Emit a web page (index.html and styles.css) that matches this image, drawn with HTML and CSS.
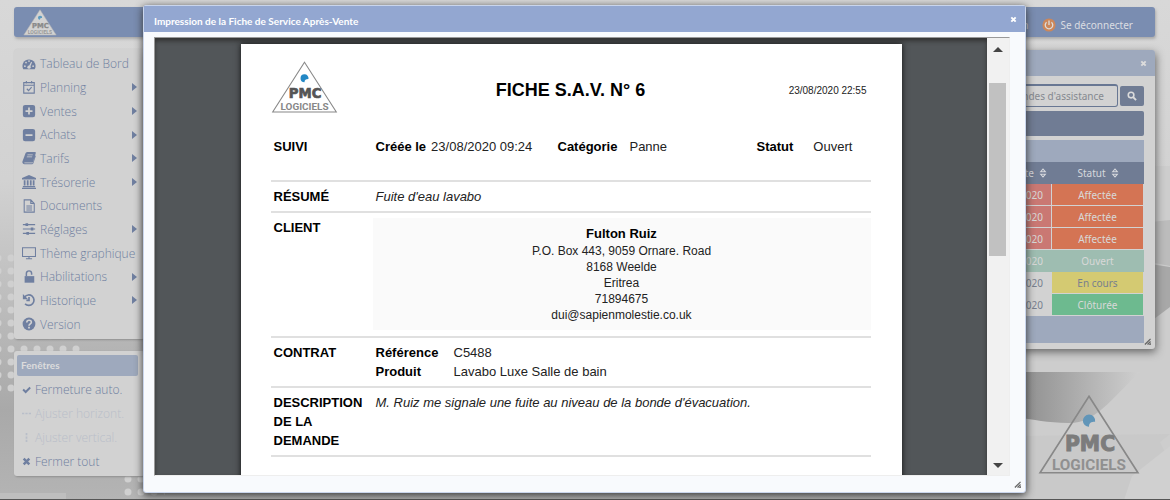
FILE: index.html
```html
<!DOCTYPE html>
<html lang="fr">
<head>
<meta charset="utf-8">
<title>PMC Logiciels</title>
<link rel="stylesheet" href="styles.css">
</head>
<body>
<svg class="backdrop" viewBox="0 0 1170 500" preserveAspectRatio="none" aria-hidden="true">
  <defs>
    <linearGradient id="base" x1="0" y1="0" x2="0" y2="1"><stop offset="0" stop-color="#d8d8d8"/><stop offset=".36" stop-color="#d2d2d2"/><stop offset=".6" stop-color="#bdbdbd"/><stop offset=".82" stop-color="#a9a9a9"/><stop offset="1" stop-color="#b4b4b4"/></linearGradient>
    <linearGradient id="right" x1="0" y1="0" x2="0" y2="1"><stop offset="0" stop-color="#d8d8d8"/><stop offset=".36" stop-color="#d2d2d2"/><stop offset="1" stop-color="#cfcfcf"/></linearGradient>
    <linearGradient id="swoosh" x1="0" y1="0" x2="1" y2="0"><stop offset="0" stop-color="#8e8e8e"/><stop offset="1" stop-color="#cfcfcf"/></linearGradient>
    <pattern id="dots" width="13" height="13" patternUnits="userSpaceOnUse" x="4" y="252"><circle cx="7" cy="6" r="3.5" fill="#d0d0d0"/></pattern>
  </defs>
  <rect width="1170" height="500" fill="url(#base)"/>
  <rect x="1000" width="170" height="500" fill="url(#right)"/>
  <path d="M1100 166H1170V500H1000V340z" fill="#cdcdcd"/>
  <path d="M1150 222l20-2v46l-20-4z" fill="#bcbcbc"/>
  <path d="M1150 264l20 3v40l-20 15z" fill="#a8a8a8"/>
  <path d="M1020 372H1140C1110 400 1095 424 1068 423C1048 423 1032 419 1020 418z" fill="url(#swoosh)"/>
  <path d="M1020 436l150-2-10 8 10 20v38h-150z" fill="#c9c9c9"/>
  <path d="M1170 446l-38 30-8 24h46z" fill="#d0d0d0"/>
  <path d="M0 252H17V392H0zM17 336H82V360H17zM121 474H165V500H121z" fill="url(#dots)"/>
  <path d="M0 493H66V499H0z" fill="#bebebe"/>
  <path d="M0 499H1170V500H0z" fill="#555"/>
</svg>

<svg class="sprite" aria-hidden="true">
  <symbol id="logo" viewBox="0 0 100 80">
    <path d="M50 2L98 77H2z" fill="var(--fill)" stroke="var(--edge)" stroke-width="1.6"/>
    <path d="M50 20a6 6 0 1 0 0 12c0-4 2-5 6-5a6 6 0 0 0-6-7z" fill="var(--dot)"/>
    <text x="51" y="56" text-anchor="middle" class="logo-top">PMC</text>
    <text x="50" y="74" text-anchor="middle" class="logo-bottom">LOGICIELS</text>
  </symbol>
  <symbol id="gauge" viewBox="0 0 16 16"><path d="M1.500 14A7.500 7.500 0 1 1 14.500 14z"/><g fill="#d2d2d2"><circle cx="3.300" cy="10.500" r="1"/><circle cx="4.600" cy="6.300" r="1"/><circle cx="8" cy="4.600" r="1"/><circle cx="12.700" cy="10.500" r="1"/><circle cx="8" cy="11.600" r="1.900"/><path d="M7.500 11l3-5.500 1 .5-2.300 5.700z"/></g></symbol>
  <symbol id="calendar" viewBox="0 0 16 16"><path d="M2 3h12v12H2zM2 6h12M5 1v3M11 1v3M5.500 10l2 2.200 3.500-4" fill="none" stroke="currentColor" stroke-width="1.300"/></symbol>
  <symbol id="plus" viewBox="0 0 16 16"><path fill-rule="evenodd" d="M3.500 1h9A2.500 2.500 0 0 1 15 3.500v9a2.500 2.500 0 0 1-2.500 2.500h-9A2.500 2.500 0 0 1 1 12.500v-9A2.500 2.500 0 0 1 3.500 1zM7 4v3H4v2h3v3h2V9h3V7H9V4z"/></symbol>
  <symbol id="minus" viewBox="0 0 16 16"><path fill-rule="evenodd" d="M3.500 1h9A2.500 2.500 0 0 1 15 3.500v9a2.500 2.500 0 0 1-2.500 2.500h-9A2.500 2.500 0 0 1 1 12.500v-9A2.500 2.500 0 0 1 3.500 1zM4 7v2h8V7z"/></symbol>
  <symbol id="book" viewBox="0 0 16 16"><path fill-rule="evenodd" d="M6 1h8.500c1 0 1.500.6 1.200 1.500L13 12c-.2.700-.8 1-1.500 1H3c-.7 0-.6 1 .2 1h8.900L15 5l.8.800L13 14c-.3.700-.8 1-1.500 1H3c-1.800 0-3-1.500-2.500-3L3.800 3C4.200 1.800 5 1 6 1zm.4 3l-.3.900h6l.3-.9zm-.7 2.200l-.3.900h6l.3-.9z"/></symbol>
  <symbol id="bank" viewBox="0 0 16 16"><path d="M8 0l8 3.500V5H0V3.500zM2 6h2v6H2zM5.500 6h2v6h-2zM9 6h2v6H9zM12.300 6h2v6h-2zM1 12.600h14V14H1zM0 14.500h16V16H0z"/></symbol>
  <symbol id="file" viewBox="0 0 16 16"><path d="M2.500 1H10l4 4v10H2.500zM10 1v4h4M5 8h6.500M5 10.200h6.500M5 12.500h6.500" fill="none" stroke="currentColor" stroke-width="1.200"/></symbol>
  <symbol id="sliders" viewBox="0 0 16 16"><path d="M1 3h14M1 8h14M1 13h14" stroke="currentColor" stroke-width="1.300"/><path d="M4 1.300h3v3.400H4zM10 6.300h3v3.400h-3zM5 11.300h3v3.400H5z"/></symbol>
  <symbol id="screen" viewBox="0 0 16 16"><path d="M.6 2h14.800v10H.6zM8 12v2.500M4.500 14.500h7" fill="none" stroke="currentColor" stroke-width="1.200"/></symbol>
  <symbol id="lock" viewBox="0 0 16 16"><path d="M3 7h11v7.500H3z"/><path d="M5 7V4a3 3 0 0 1 6 0v1.500" fill="none" stroke="currentColor" stroke-width="1.700"/></symbol>
  <symbol id="history" viewBox="0 0 16 16"><path d="M3 4.500A6 6 0 1 1 3.500 12.500M8 4.500v4H5" fill="none" stroke="currentColor" stroke-width="1.900"/><path d="M1 1v6h6z"/></symbol>
  <symbol id="help" viewBox="0 0 16 16"><circle cx="8" cy="8" r="7.300"/><path d="M5.500 6.200c0-3.400 5.200-3.200 5.200-.3C10.700 7.800 8 7.800 8 10" fill="none" stroke="#d2d2d2" stroke-width="1.900"/><path d="M7 11h2v2H7z" fill="#d2d2d2"/></symbol>
  <symbol id="check" viewBox="0 0 16 16"><path d="M2 8l4.500 4.500L14.500 4.500" fill="none" stroke="currentColor" stroke-width="3.400"/></symbol>
  <symbol id="cross" viewBox="0 0 16 16"><path d="M3 3l10 10M13 3L3 13" fill="none" stroke="currentColor" stroke-width="4.400"/></symbol>
  <symbol id="dots-h" viewBox="0 0 16 16"><path d="M0 6.500h4v3H0zM6 6.500h4v3H6zM12 6.500h4v3h-4z"/></symbol>
  <symbol id="dots-v" viewBox="0 0 16 16"><path d="M6.500 0h3v4h-3zM6.500 6h3v4h-3zM6.500 12h3v4h-3z"/></symbol>
  <symbol id="search" viewBox="0 0 16 16"><circle cx="6.500" cy="6.500" r="4.500" fill="none" stroke="currentColor" stroke-width="2.500"/><path d="M10 10l4.500 4.500" stroke="currentColor" stroke-width="3"/></symbol>
  <symbol id="sort" viewBox="0 0 10 14"><path d="M2 5.500L5 2l3 3.500zM2 8.500L5 12l3-3.500z" fill="none" stroke="currentColor" stroke-width="1.300"/></symbol>
  <symbol id="power" viewBox="0 0 16 16"><circle cx="8" cy="8" r="7.500" fill="#cc875a"/><path d="M5.200 4.800a4.300 4.300 0 1 0 5.600 0M8 2.800V8" fill="none" stroke="#ddd" stroke-width="1.500"/></symbol>
  <symbol id="grip" viewBox="0 0 8 8"><path d="M1 7.500L7.500 1M4 7.500L7.500 4" stroke="#666" stroke-width="1.500"/><path d="M5 8l3-3v3z" fill="#777"/></symbol>
</svg>

<div class="app">
  <header class="topbar">
    <svg class="topbar-logo"><use href="#logo"/></svg>
    <nav class="topbar-links">
      <a href="#">Admin</a>
      <a href="#"><svg class="power"><use href="#power"/></svg>Se déconnecter</a>
    </nav>
  </header>

  <div class="workspace">
    <aside class="sidebar">
      <nav class="panel">
        <ul class="menu">
          <li><a href="#"><svg><use href="#gauge"/></svg>Tableau de Bord</a></li>
          <li><a href="#" class="sub"><svg><use href="#calendar"/></svg>Planning</a></li>
          <li><a href="#" class="sub"><svg><use href="#plus"/></svg>Ventes</a></li>
          <li><a href="#" class="sub"><svg><use href="#minus"/></svg>Achats</a></li>
          <li><a href="#" class="sub"><svg><use href="#book"/></svg>Tarifs</a></li>
          <li><a href="#" class="sub"><svg><use href="#bank"/></svg>Trésorerie</a></li>
          <li><a href="#"><svg><use href="#file"/></svg>Documents</a></li>
          <li><a href="#" class="sub"><svg><use href="#sliders"/></svg>Réglages</a></li>
          <li><a href="#"><svg><use href="#screen"/></svg>Thème graphique</a></li>
          <li><a href="#" class="sub"><svg><use href="#lock"/></svg>Habilitations</a></li>
          <li><a href="#" class="sub"><svg><use href="#history"/></svg>Historique</a></li>
          <li><a href="#"><svg><use href="#help"/></svg>Version</a></li>
        </ul>
      </nav>
      <section class="panel">
        <h2 class="panel-title">Fenêtres</h2>
        <div class="actions">
          <button><svg><use href="#check"/></svg>Fermeture auto.</button>
          <button disabled><svg><use href="#dots-h"/></svg>Ajuster horizont.</button>
          <button disabled><svg><use href="#dots-v"/></svg>Ajuster vertical.</button>
          <button><svg><use href="#cross"/></svg>Fermer tout</button>
        </div>
      </section>
    </aside>

    <main class="content">
      <section class="window">
        <header class="window-title"><button class="close" aria-label="Fermer"><svg><use href="#cross"/></svg></button></header>
        <div class="window-body">
          <form class="search">
            <input type="text" placeholder="Demandes d'assistance" aria-label="Rechercher">
            <button type="button" aria-label="Lancer la recherche"><svg><use href="#search"/></svg></button>
          </form>
          <div class="toolbar"></div>
          <div class="table-band"></div>
          <table class="requests">
            <thead><tr><th>Date<svg><use href="#sort"/></svg></th><th class="state">Statut<svg><use href="#sort"/></svg></th></tr></thead>
            <tbody>
              <tr class="assigned"><td>23/08/2020</td><td>Affectée</td></tr>
              <tr class="assigned"><td>23/08/2020</td><td>Affectée</td></tr>
              <tr class="assigned"><td>23/08/2020</td><td>Affectée</td></tr>
              <tr class="open"><td>23/08/2020</td><td>Ouvert</td></tr>
              <tr class="running"><td>23/08/2020</td><td>En cours</td></tr>
              <tr class="closed"><td>23/08/2020</td><td>Clôturée</td></tr>
            </tbody>
          </table>
          <div class="table-foot"></div>
        </div>
        <svg class="grip"><use href="#grip"/></svg>
      </section>
      <svg class="brand"><use href="#logo"/></svg>
    </main>
  </div>
</div>

<div class="modal" role="dialog" aria-labelledby="modal-title">
  <header class="modal-title">
    <h1 id="modal-title">Impression de la Fiche de Service Après-Vente</h1>
    <button class="close" aria-label="Fermer la fiche"><svg><use href="#cross"/></svg></button>
  </header>
  <div class="modal-body">
    <div class="viewer">
      <div class="canvas">
        <article class="sheet">
          <header class="sheet-head">
            <svg class="sheet-logo"><use href="#logo"/></svg>
            <h2>FICHE S.A.V. N° 6</h2>
            <time>23/08/2020 22:55</time>
          </header>
          <table class="record">
            <tr class="follow"><th scope="row">SUIVI</th><td><div class="facts">
              <span><b>Créée le</b><i>23/08/2020 09:24</i></span>
              <span><b>Catégorie</b><i>Panne</i></span>
              <span><b>Statut</b><i>Ouvert</i></span>
            </div></td></tr>
            <tr><th scope="row">RÉSUMÉ</th><td><em>Fuite d'eau lavabo</em></td></tr>
            <tr class="client"><th scope="row">CLIENT</th><td><address><strong>Fulton Ruiz</strong><br>P.O. Box 443, 9059 Ornare. Road<br>8168 Weelde<br>Eritrea<br>71894675<br>dui@sapienmolestie.co.uk</address></td></tr>
            <tr><th scope="row">CONTRAT</th><td><dl><dt>Référence</dt><dd>C5488</dd><dt>Produit</dt><dd>Lavabo Luxe Salle de bain</dd></dl></td></tr>
            <tr><th scope="row">DESCRIPTION DE LA DEMANDE</th><td><em>M. Ruiz me signale une fuite au niveau de la bonde d'évacuation.</em></td></tr>
          </table>
        </article>
      </div>
      <div class="scrollbar"><span class="arrow up"></span><span class="thumb"></span><span class="arrow down"></span></div>
    </div>
  </div>
  <svg class="grip"><use href="#grip"/></svg>
</div>
</body>
</html>
```
FILE: styles.css
```css
* { box-sizing: border-box; }
body {
  margin: 0;
  min-height: 100vh;
  overflow: hidden;
  background: #cfcfcf;
  color: #6f7fa0;
  font-family: "Noto Sans", "Open Sans", sans-serif;
  font-size: 12px;
}
button { border: 0; padding: 0; background: none; font: inherit; color: inherit; }
a { color: inherit; text-decoration: none; }
svg { fill: currentColor; flex: none; }
.sprite { position: absolute; width: 0; height: 0; }
.backdrop { position: absolute; inset: 0; width: 100%; height: 100%; }
.logo-top { font: 700 20px/16px "DejaVu Sans", sans-serif; fill: var(--ink); stroke: var(--ink); stroke-width: 1; }
.logo-bottom { font: 700 15px/15px "Roboto", sans-serif; fill: var(--ink2); }

.app { position: relative; padding: 7px 15px 0 14px; }
.topbar {
  display: flex;
  justify-content: space-between;
  align-items: center;
  height: 30px;
  padding: 0 22px 0 9px;
  border-radius: 3px;
  background: #7a8db1;
  box-shadow: 1px 2px 3px #aaa;
  color: #dadde2;
  font-size: 10px;
}
.topbar-logo { width: 34px; height: 27px; --fill: #d2d2d2; --edge: #b5b5b5; --dot: #5b9bc0; --ink: #8a8a8a; --ink2: #999; }
.topbar-links { display: flex; gap: 14px; padding-top: 5px; }
.topbar-links a { display: flex; align-items: center; gap: 4px; }
.power { width: 14px; height: 14px; }

.workspace { display: grid; grid-template-columns: 131px 1fr; margin-top: 12px; }
.sidebar { display: flex; flex-direction: column; gap: 12px; font-family: "Open Sans", sans-serif; font-weight: 300; }
.panel { border-radius: 3px; background: #d2d2d2; box-shadow: 1px 1px 2px #8f8f8f; padding: 3px; }
.menu { display: grid; grid-auto-rows: 1fr; min-height: 284px; margin: 0; padding: 0; list-style: none; }
.menu a { display: flex; align-items: center; gap: 4px; height: 100%; padding: 0 5px; white-space: nowrap; }
.menu svg { width: 14px; height: 14px; }
.sub::after { content: ""; margin-left: auto; border: 4px solid transparent; border-left: 5px solid #6f7fa0; border-right: 0; }
.panel-title { margin: 1px 4px 1px 0; padding-left: 4px; border-radius: 2px; background: #9ea9bd; color: #dcdcdc; font: 700 10px/21px "Lato", sans-serif; }
.actions { display: grid; grid-auto-rows: 1fr; min-height: 96px; }
.actions button { display: flex; align-items: center; gap: 4px; padding-left: 5px; white-space: nowrap; }
.actions button:disabled { color: #b9bec9; }
.actions svg { width: 9px; height: 9px; }

.content { display: flex; flex-direction: column; }
.window { position: relative; margin: 1px 0 0; padding-bottom: 6px; border-radius: 3px; background: #d2d2d2; box-shadow: 1px 3px 8px #666; }
.window-title, .modal-title { display: flex; align-items: center; justify-content: space-between; height: 26px; }
.window-title { justify-content: flex-end; border-radius: 3px 3px 0 0; background: #9ea9bd; padding: 0 8px; color: #dcdcdc; }
.close { display: flex; }
.close svg { width: 7px; height: 7px; }
.window-body { padding: 8px 11px 0; font-size: 10px; }
.search { display: flex; align-items: center; gap: 2px; }
.search input { flex: 1; min-width: 0; height: 23px; padding: 0 13px; border: 1px solid #687793; border-top-width: 2px; border-radius: 3px; background: #d2d2d2; font: 10px "Noto Sans", sans-serif; text-align: right; }
.search input::placeholder { color: #858990; }
.search button { display: grid; place-items: center; width: 24px; height: 20px; border-radius: 2px; background: #707c94; color: #dcdcdc; }
.search svg { width: 10px; height: 10px; }
.toolbar { height: 25px; margin: 4px 0; border-radius: 2px; background: #707c94; }
.table-band { height: 22px; background: #9ea9bd; }
.table-foot { height: 27px; background: #9ea9bd; }
.requests { width: 100%; border-spacing: 0; text-align: center; }
.requests th { height: 22px; padding: 0 5px 0 0; background: #707c94; color: #d6d8dd; font-weight: 400; text-align: right; }
.requests .state { width: 92px; padding: 0; text-align: center; }
.requests th svg { width: 8px; height: 12px; margin-left: 5px; vertical-align: -2px; }
.requests td { height: 22px; padding: 0; border: solid #d2d2d2; border-width: 0 1px 1px 0; color: #d8d8d8; }
.requests td:first-child { padding-right: 8px; text-align: right; }
.assigned td { background: #d47454; }
.assigned td:first-child { background: #ca7873; }
.requests .open td { background: #9ebdb1; border-color: #9ebdb1; }
.requests .running td, .requests .closed td:first-child { color: #777f8e; }
.running td:last-child { background: #d4ca72; }
.closed td:last-child { background: #6dba8f; }
.grip { position: absolute; right: 4px; bottom: 4px; width: 7px; height: 7px; }
.brand { align-self: flex-end; width: 102px; height: 82px; margin: 45px 15px 0 0; --fill: none; --edge: #888; --dot: #6195b8; --ink: #7c7c7c; --ink2: #909090; }

.modal {
  position: absolute;
  top: 5px;
  bottom: 7px;
  left: 143px;
  right: 144px;
  display: flex;
  flex-direction: column;
  border: 1px solid #c9d5ec;
  border-radius: 3px;
  background: #f8fafd;
  box-shadow: 0 2px 9px #333;
}
.modal-title { padding: 0 8px 0 10px; background: #93a7d1; color: #fff; }
.modal-title h1 { margin: 0; padding-top: 4px; font: 700 10px "Lato", sans-serif; }
.modal-body { flex: 1; min-height: 0; padding: 5px 15px 16px 10px; }
.viewer { display: flex; height: 100%; border: 1px solid #999; border-right-color: #eee; border-bottom-color: #eee; background: #f1f1f1; }
.canvas { flex: 1; padding-top: 6px; overflow: hidden; background: #525659; box-shadow: inset 0 3px 4px #333; }
.sheet { width: 80%; max-width: 661px; min-height: 700px; margin: 0 auto; padding: 17px 31px 0 30px; background: #fff; box-shadow: 0 0 6px #111; color: #000; font: 13px/19px "Liberation Sans", Arial, sans-serif; }
.sheet-head { display: grid; grid-template-columns: 1fr auto 1fr; align-items: center; }
.sheet-head h2 { margin: 0; padding-top: 5px; font-size: 18px; }
.sheet-head time { padding: 5px 4px 0 0; color: #222; font-size: 10px; text-align: right; }
.sheet-logo { width: 67px; height: 53px; --fill: #fff; --edge: #888; --dot: #2388c5; --ink: #555; --ink2: #888; }
.record { width: 100%; margin-top: 23px; border-spacing: 0; }
.record th { width: 102px; padding: 5px 0 5px 3px; text-align: left; vertical-align: top; }
.record td { padding: 5px 0 5px 3px; vertical-align: top; color: #222; }
.record th, .record td { border-bottom: 2px solid #e0e0e0; }
.record .follow > * { padding-top: 0; padding-bottom: 24px; }
.facts { display: grid; grid-template-columns: 182px 1fr 114px; }
.facts b { color: #000; }
.facts i { margin-left: 12px; font-style: normal; }
.facts span:first-child i { margin-left: 5px; }
.facts span:last-child i { margin-left: 20px; }
.record .client td { padding: 5px 0 6px; }
.client address { padding: 7px 0; background: #fafafa; font-size: 12px; font-style: normal; line-height: 16px; text-align: center; }
.client strong { color: #000; font-size: 13px; line-height: 18px; }
.record dl { display: grid; grid-template-columns: 78px 1fr; margin: 0; }
.record dt { color: #000; font-weight: 700; }
.record dd { margin: 0; }
.scrollbar { display: flex; flex-direction: column; align-items: center; width: 22px; padding: 9px 3px 7px 2px; background: #f1f1f1; }
.arrow { border: 5px solid transparent; }
.up { border-top: 0; border-bottom-color: #444; }
.down { margin-top: auto; border-bottom: 0; border-top-color: #444; }
.thumb { width: 17px; height: 41%; margin-top: 31px; background: #c1c1c1; }
```
